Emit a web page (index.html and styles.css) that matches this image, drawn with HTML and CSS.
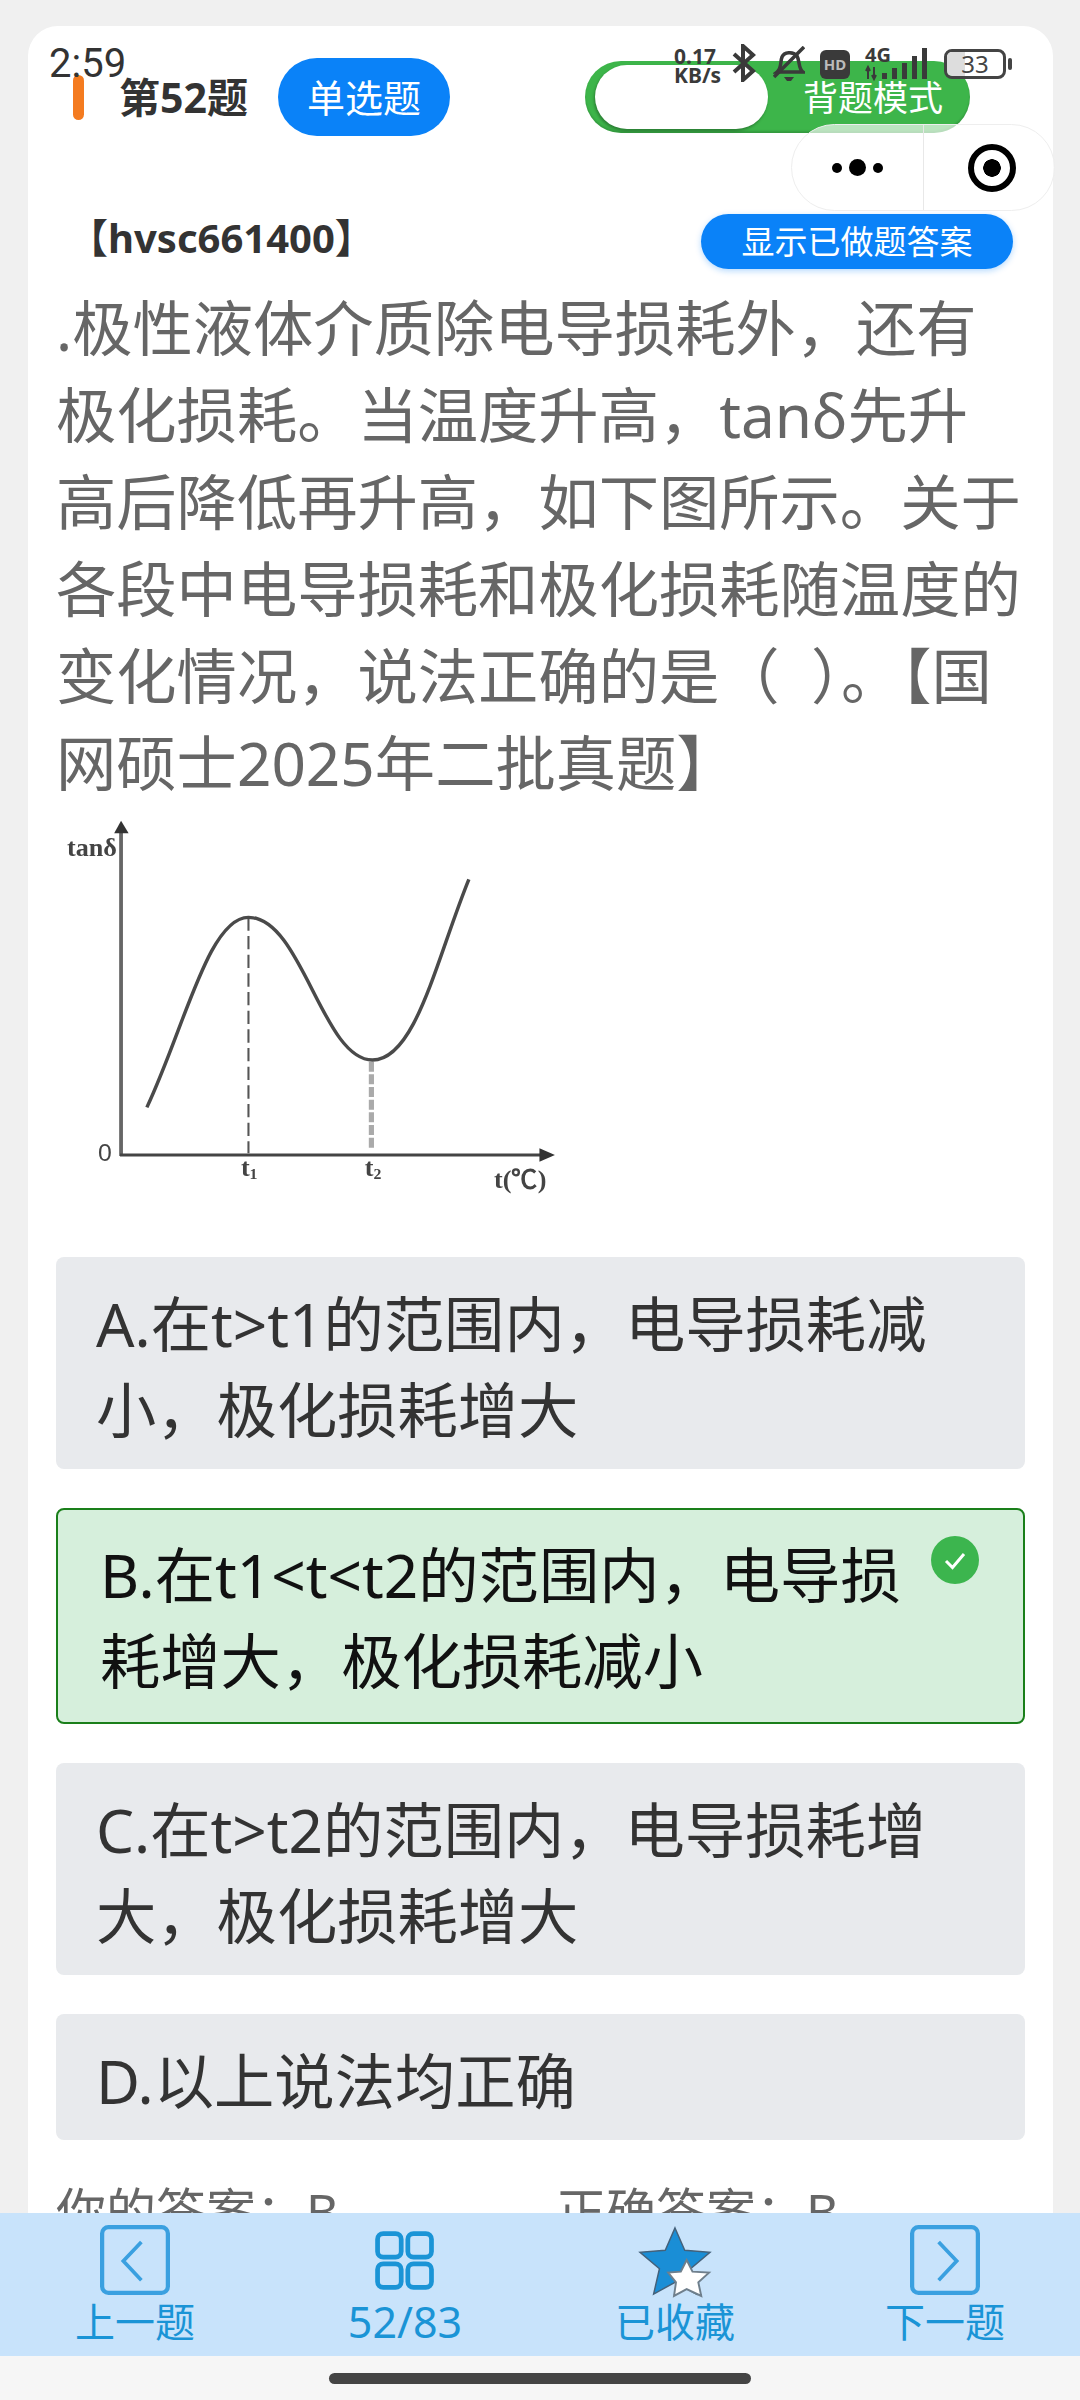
FILE: index.html
```html
<!DOCTYPE html>
<html lang="zh-CN">
<head>
  <meta charset="UTF-8">
  <title>第52题</title>
  <meta name="viewport" content="width=device-width, initial-scale=1.0">
  <link rel="stylesheet" href="styles.css">
</head>
<body>
  <main class="screen">
    <div class="card">
      <header class="head-row">
        <span class="head-mark"></span>
        <h1 class="head-title">第52题</h1>
        <span class="type-pill">单选题</span>
        <div class="mode-toggle">
          <span class="mode-knob"></span>
          <span class="mode-label">背题模式</span>
        </div>
      </header>

      <div class="code-row">
        <span class="code-text">【hvsc661400】</span>
        <button type="button" class="show-btn">显示已做题答案</button>
      </div>

      <p class="question">.极性液体介质除电导损耗外，还有极化损耗。当温度升高，tanδ先升高后降低再升高，如下图所示。关于各段中电导损耗和极化损耗随温度的变化情况，说法正确的是（&nbsp;&nbsp;）。【国网硕士2025年二批真题】</p>

      <svg class="chart" viewBox="49 12 1481 1200" preserveAspectRatio="none">
        <line class="axis-y" x1="235" y1="85" x2="235" y2="1068"/>
        <polygon class="axis-head" points="235,62 215,100 257,100"/>
        <line class="axis-x" x1="232" y1="1065" x2="1460" y2="1065"/>
        <polygon class="axis-head" points="1495,1065 1450,1045 1450,1085"/>
        <line class="dash-one" x1="605" y1="352" x2="605" y2="1060"/>
        <line class="dash-two" x1="962" y1="785" x2="962" y2="1045"/>
        <path class="curve" d="M310 922 C 420 680, 490 352, 605 352 C 760 352, 820 780, 965 780 C 1090 780, 1150 480, 1245 238"/>
        <text class="chart-text" x="78" y="168">tanδ</text>
        <text class="chart-zero" x="168" y="1084">0</text>
        <text class="chart-text" x="583" y="1128">t<tspan class="chart-sub" dy="10">1</tspan></text>
        <text class="chart-text" x="943" y="1128">t<tspan class="chart-sub" dy="10">2</tspan></text>
        <text class="chart-text" x="1318" y="1165">t(℃)</text>
      </svg>

      <div class="options">
        <div class="option">A.在t&gt;t1的范围内，电导损耗减小，极化损耗增大</div>
        <div class="option option-right">
          B.在t1&lt;t&lt;t2的范围内，电导损耗增大，极化损耗减小
          <svg class="check-badge" viewBox="0 0 48 48">
            <circle cx="24" cy="24" r="24" fill="#3cb54e"/>
            <path d="M15 25 L21.5 31.5 L33 18" fill="none" stroke="#fff" stroke-width="3"/>
          </svg>
        </div>
        <div class="option">C.在t&gt;t2的范围内，电导损耗增大，极化损耗增大</div>
        <div class="option">D.以上说法均正确</div>
      </div>

      <div class="answers">
        <span class="answer">你的答案：B</span>
        <span class="answer">正确答案：B</span>
      </div>
    </div>
  </main>

  <nav class="bottom-nav">
    <a class="nav-item">
      <svg class="nav-icon" viewBox="0 0 66 66">
        <rect x="2" y="2" width="62" height="62" rx="6" class="icon-box"/>
        <path d="M39 16 L22 34 L39 52" class="icon-line"/>
      </svg>
      <span>上一题</span>
    </a>
    <a class="nav-item">
      <svg class="nav-icon" viewBox="-4 -4 74 74">
        <rect x="4" y="5" width="25" height="25" rx="6" class="icon-grid"/>
        <rect x="36" y="5" width="25" height="25" rx="6" class="icon-grid"/>
        <rect x="4" y="37" width="25" height="25" rx="6" class="icon-grid"/>
        <rect x="36" y="37" width="25" height="25" rx="6" class="icon-grid"/>
      </svg>
      <span class="nav-count">52/83</span>
    </a>
    <a class="nav-item">
      <svg class="nav-icon" viewBox="0 0 72 66">
        <polygon class="star-big" points="36,0 46,23 72,25 52,42 58,68 36,56 14,68 20,42 0,25 26,23"/>
        <polygon class="star-small" points="48,33 54,45 71,46 60,56 63,70 48,63 35,70 37,56 29,46 42,45"/>
      </svg>
      <span>已收藏</span>
    </a>
    <a class="nav-item">
      <svg class="nav-icon" viewBox="0 0 66 66">
        <rect x="2" y="2" width="62" height="62" rx="6" class="icon-box"/>
        <path d="M27 16 L44 34 L27 52" class="icon-line"/>
      </svg>
      <span>下一题</span>
    </a>
  </nav>

  <div class="gesture-area">
    <span class="gesture-bar"></span>
  </div>

  <!-- phone status bar, sits over the page -->
  <div class="status-bar">
    <span class="status-time">2:59</span>
    <div class="status-icons">
      <span class="net-speed">0.17<br>KB/s</span>
      <svg class="icon-bt" viewBox="0 0 24 38">
        <path d="M2 10 L21 27 L11 36 L11 2 L21 11 L2 28" fill="none" stroke="#3a3a3a" stroke-width="4"/>
      </svg>
      <svg class="icon-bell" viewBox="0 0 32 36">
        <path d="M4 26 C9 22 7 16 9 11 C11 6 20 5 24 10 C27 15 25 22 30 26 Z" fill="none" stroke="#3a3a3a" stroke-width="3.5"/>
        <path d="M11 31 H21 L18 35 H14 Z" fill="#3a3a3a"/>
        <line x1="1" y1="31" x2="31" y2="1" stroke="#3a3a3a" stroke-width="3.5"/>
      </svg>
      <span class="hd-badge">HD</span>
      <svg class="icon-signal" viewBox="0 0 64 34">
        <text x="0" y="16" class="signal-text">4G</text>
        <path d="M3 33 V22 M1 25 L3 21 L5 25 M9 21 V32 M7 29 L9 33 L11 29" fill="none" stroke="#3a3a3a" stroke-width="2"/>
        <rect x="17" y="27" width="5" height="6" fill="#3a3a3a"/>
        <rect x="27" y="22" width="5" height="11" fill="#3a3a3a"/>
        <rect x="37" y="17" width="5" height="16" fill="#3a3a3a"/>
        <rect x="47" y="10" width="5" height="23" fill="#3a3a3a"/>
        <rect x="57" y="2" width="5" height="31" fill="#3a3a3a"/>
      </svg>
      <div class="battery">
        <span class="battery-level"></span>
        <span class="battery-text">33</span>
      </div>
      <span class="battery-nub"></span>
    </div>
  </div>

  <!-- mini program capsule -->
  <div class="capsule">
    <div class="capsule-side capsule-dots">
      <span class="dot"></span>
      <span class="dot dot-big"></span>
      <span class="dot"></span>
    </div>
    <div class="capsule-side">
      <span class="capsule-target"></span>
    </div>
  </div>
</body>
</html>
```

FILE: styles.css
```css
* {
  margin: 0;
  padding: 0;
  box-sizing: border-box;
}

body {
  position: relative;
  width: 1080px;
  height: 2400px;
  display: flex;
  flex-direction: column;
  overflow: hidden;
  background-color: #f0f0f0;
  font-family: "Noto Sans", "Noto Sans CJK SC", sans-serif;
  color: #333;
}

.screen {
  flex: 1;
  min-height: 0;
  overflow: hidden;
  padding: 26px 27px 0 28px;
}

.card {
  background-color: #fff;
  border-radius: 30px 30px 0 0;
  padding: 32px 28px 0;
  min-height: 2300px;
}

/* header */
.head-row {
  display: flex;
  align-items: center;
  height: 78px;
  padding-left: 17px;
}

.head-mark {
  width: 11px;
  height: 45px;
  border-radius: 6px;
  background-color: #f47b20;
}

.head-title {
  margin-left: 35px;
  font-size: 41px;
  font-weight: 700;
  line-height: 1;
  color: #333;
}

.type-pill {
  margin-left: 30px;
  width: 172px;
  height: 78px;
  border-radius: 39px;
  background-color: #0a82f8;
  color: #fff;
  font-size: 38px;
  line-height: 78px;
  text-align: center;
}

.mode-toggle {
  display: flex;
  align-items: center;
  margin-left: auto;
  margin-right: 55px;
  width: 385px;
  height: 72px;
  padding: 0 10px;
  border-radius: 36px;
  background-color: #3db54a;
  box-shadow: inset 0 -2px 2px rgba(0, 0, 0, 0.15);
}

.mode-knob {
  width: 173px;
  height: 64px;
  border-radius: 32px;
  background-color: #fff;
  box-shadow: -1px 2px 3px rgba(0, 0, 0, 0.3);
}

.mode-label {
  margin-left: 35px;
  color: #fff;
  font-size: 35px;
  line-height: 1;
}

.code-row {
  display: flex;
  align-items: center;
  justify-content: space-between;
  height: 55px;
  margin-top: 78px;
  padding: 0 12px;
}

.code-text {
  margin-bottom: 8px;
  font-size: 40px;
  font-weight: 700;
  line-height: 1;
}

.show-btn {
  width: 312px;
  height: 55px;
  border: none;
  border-radius: 28px;
  background-color: #0a82f8;
  color: #fff;
  font-family: inherit;
  font-size: 33px;
  line-height: 55px;
  box-shadow: 0 2px 6px rgba(10, 130, 248, 0.3);
}

.question {
  width: 967px;
  margin-top: 16px;
  font-size: 60.3px;
  line-height: 87px;
  color: #666;
}

.chart {
  display: block;
  width: 510px;
  height: 400px;
  margin: -3px 0 53px 1px;
  filter: blur(0.6px);
}

.axis-y {
  stroke: #666;
  stroke-width: 11;
}

.axis-x {
  stroke: #444;
  stroke-width: 9;
}

.axis-head {
  fill: #333;
}

.dash-one {
  stroke: #555;
  stroke-width: 6;
  stroke-dasharray: 40 16;
}

.dash-two {
  stroke: #aaa;
  stroke-width: 15;
  stroke-dasharray: 30 8;
}

.curve {
  fill: none;
  stroke: #4a4a4a;
  stroke-width: 10;
}

.chart-text {
  font-family: "Liberation Serif", serif;
  font-size: 76px;
  font-weight: 700;
  fill: #444;
}

.chart-sub {
  font-size: 46px;
}

.chart-zero {
  font-family: "Liberation Sans", sans-serif;
  font-size: 72px;
  fill: #444;
}

/* options */
.options {
  display: flex;
  flex-direction: column;
  gap: 39px;
}

.option {
  position: relative;
  padding: 24px 60px 16px 40px;
  border-radius: 8px;
  background-color: #e8eaed;
  font-size: 60.3px;
  line-height: 86px;
  color: #333;
}

.option-right {
  padding: 22px 94px 18px 42px;
  border: 2px solid #1a7f1a;
  background-color: #d6efdc;
  color: #111;
}

.check-badge {
  position: absolute;
  top: 26px;
  right: 44px;
  width: 48px;
  height: 48px;
}

.answers {
  display: flex;
  margin-top: 35px;
}

.answer {
  flex: none;
  width: 500px;
  font-size: 50px;
  line-height: 72px;
  color: #666;
}

.answer:last-child {
  width: 400px;
}

/* bottom nav */
.bottom-nav {
  display: grid;
  grid-template-columns: repeat(4, 1fr);
  flex-shrink: 0;
  height: 143px;
  padding-top: 12px;
  background-color: #c8e3fb;
}

.nav-item {
  display: flex;
  flex-direction: column;
  align-items: center;
  color: #1a94d6;
  font-size: 40px;
  line-height: 50px;
}

.nav-count {
  font-size: 43px;
}

.nav-icon {
  display: block;
  width: 70px;
  height: 70px;
  margin-bottom: 2px;
  overflow: visible;
}

.icon-box {
  fill: none;
  stroke: #3aa0e0;
  stroke-width: 4;
}

.icon-line {
  fill: none;
  stroke: #3aa0e0;
  stroke-width: 3.5;
}

.icon-grid {
  fill: none;
  stroke: #1a94d6;
  stroke-width: 5;
}

.star-big {
  fill: #1a8ed6;
  stroke: #44617a;
  stroke-width: 1.5;
}

.star-small {
  fill: #fff;
  stroke: #6f7f8c;
  stroke-width: 2;
}

.gesture-area {
  display: flex;
  justify-content: center;
  flex-shrink: 0;
  height: 44px;
  padding-top: 17px;
  background-color: #f6f6f6;
}

.gesture-bar {
  width: 422px;
  height: 11px;
  border-radius: 6px;
  background-color: #444;
}

/* status bar */
.status-bar {
  position: absolute;
  top: 44px;
  left: 0;
  width: 100%;
  display: flex;
  justify-content: space-between;
  padding: 0 68px 0 49px;
  color: #333;
}

.status-time {
  font-family: Roboto, sans-serif;
  font-size: 40px;
  line-height: 40px;
}

.status-icons {
  display: flex;
  align-items: flex-start;
}

.net-speed {
  width: 58px;
  font-size: 21px;
  font-weight: 700;
  line-height: 19px;
  color: #3a3a3a;
  padding-top: 3px;
}

.icon-bt {
  width: 24px;
  height: 38px;
  margin-right: 17px;
}

.icon-bell {
  width: 32px;
  height: 36px;
  margin-top: 2px;
  margin-right: 15px;
}

.hd-badge {
  width: 30px;
  height: 29px;
  margin-top: 6px;
  border-radius: 6px;
  background-color: #3a3a3a;
  color: #bbb;
  font-size: 15px;
  font-weight: 700;
  line-height: 29px;
  text-align: center;
}

.icon-signal {
  width: 64px;
  height: 34px;
  margin: 2px 15px 0 15px;
  overflow: visible;
}

.signal-text {
  font-size: 20px;
  font-weight: 700;
  fill: #3a3a3a;
}

.battery {
  position: relative;
  width: 62px;
  height: 30px;
  margin-top: 5px;
  border: 3px solid #444;
  border-radius: 8px;
  overflow: hidden;
  text-align: center;
}

.battery-level {
  position: absolute;
  top: 0;
  left: 0;
  width: 33%;
  height: 100%;
  background-color: #ddd;
}

.battery-text {
  position: relative;
  display: block;
  font-size: 24px;
  line-height: 24px;
  color: #444;
}

.battery-nub {
  width: 4px;
  height: 12px;
  margin: 14px 0 0 2px;
  border-radius: 2px;
  background-color: #444;
}

/* capsule */
.capsule {
  position: absolute;
  top: 124px;
  left: 791px;
  display: flex;
  width: 264px;
  height: 87px;
  border: 1px solid #eee;
  border-radius: 44px;
  background-color: rgba(255, 255, 255, 0.65);
}

.capsule-side {
  display: flex;
  flex: 1;
  align-items: center;
  justify-content: center;
}

.capsule-dots {
  gap: 7px;
  border-right: 1px solid #e8e8e8;
}

.dot {
  width: 10px;
  height: 10px;
  border-radius: 50%;
  background-color: #000;
}

.dot-big {
  width: 17px;
  height: 17px;
}

.capsule-target {
  width: 48px;
  height: 48px;
  margin-left: 6px;
  border: 6px solid #000;
  border-radius: 50%;
  background: radial-gradient(circle, #000 0 8.5px, #fff 9px);
}
```
